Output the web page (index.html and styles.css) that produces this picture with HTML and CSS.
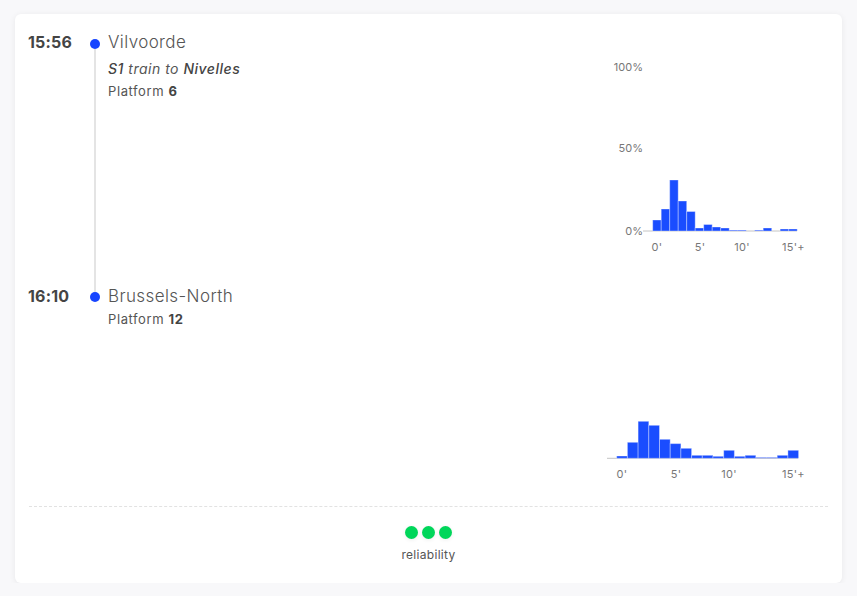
FILE: index.html
```html
<!DOCTYPE html>
<html lang="en">
<head>
<meta charset="utf-8">
<title>Trip</title>
<link rel="stylesheet" href="styles.css">
</head>
<body>
<div class="card">
  <section class="stop stop-first">
    <div class="time">15:56</div>
    <div class="rail"><span class="dot"></span><span class="line"></span></div>
    <div class="info">
      <div class="station">Vilvoorde</div>
      <div class="service"><b>S1</b> train to <b>Nivelles</b></div>
      <div class="platform">Platform <b>6</b></div>
    </div>
    <svg class="chart" width="229" height="254" viewBox="600 28 229 254">
      <g class="ylab">
        <text x="643" y="71">100%</text>
        <text x="643" y="152">50%</text>
        <text x="643" y="235">0%</text>
      </g>
      <line class="base" x1="643" y1="231" x2="797" y2="231"/>
      <g class="bars">
        <rect x="652.7" y="220" width="8.5" height="11"/>
        <rect x="661.2" y="209" width="8.5" height="22"/>
        <rect x="669.7" y="180" width="8.5" height="51"/>
        <rect x="678.2" y="201" width="8.5" height="30"/>
        <rect x="686.7" y="211.5" width="8.5" height="19.5"/>
        <rect x="695.2" y="228" width="8.5" height="3"/>
        <rect x="703.7" y="224.5" width="8.5" height="6.5"/>
        <rect x="712.2" y="227" width="8.5" height="4"/>
        <rect x="720.7" y="228" width="8.5" height="3"/>
        <rect class="faint" x="729.2" y="230" width="8.5" height="1"/>
        <rect class="faint" x="737.7" y="230" width="8.5" height="1"/>
        <rect class="faint" x="754.7" y="230" width="8.5" height="1"/>
        <rect x="763.2" y="228" width="8.5" height="3"/>
        <rect x="780.2" y="229" width="8.5" height="2"/>
        <rect x="788.7" y="229" width="8.5" height="2"/>
      </g>
      <g class="xlab">
        <text x="657" y="251" text-anchor="middle">0'</text>
        <text x="700" y="251" text-anchor="middle">5'</text>
        <text x="742" y="251" text-anchor="middle">10'</text>
        <text x="782" y="251">15'+</text>
      </g>
    </svg>
  </section>
  <section class="stop stop-last">
    <div class="time">16:10</div>
    <div class="rail"><span class="line line-top"></span><span class="dot"></span></div>
    <div class="info">
      <div class="station">Brussels-North</div>
      <div class="platform platform-tight">Platform <b>12</b></div>
    </div>
    <svg class="chart" width="229" height="224" viewBox="600 282 229 224">
      <line class="base" x1="607" y1="458.3" x2="798" y2="458.3"/>
      <g class="bars">
        <rect x="616.7" y="456" width="10.7" height="2.3"/>
        <rect x="627.4" y="442.3" width="10.7" height="16"/>
        <rect x="638.1" y="421.3" width="10.7" height="37"/>
        <rect x="648.8" y="425.3" width="10.7" height="33"/>
        <rect x="659.5" y="439.3" width="10.7" height="19"/>
        <rect x="670.2" y="443.6" width="10.7" height="14.7"/>
        <rect x="680.9" y="448.3" width="10.7" height="10"/>
        <rect x="691.6" y="455.3" width="10.7" height="3"/>
        <rect x="702.3" y="455.3" width="10.7" height="3"/>
        <rect x="713.0" y="456.3" width="10.7" height="2"/>
        <rect x="723.7" y="450.3" width="10.7" height="8"/>
        <rect x="734.4" y="456.3" width="10.7" height="2"/>
        <rect x="745.1" y="455.3" width="10.7" height="3"/>
        <rect class="faint" x="755.8" y="457.3" width="10.7" height="1"/>
        <rect class="faint" x="766.5" y="457.3" width="10.7" height="1"/>
        <rect x="777.2" y="455.3" width="10.7" height="3"/>
        <rect x="787.9" y="450.3" width="10.7" height="8"/>
      </g>
      <g class="xlab">
        <text x="622" y="478" text-anchor="middle">0'</text>
        <text x="676" y="478" text-anchor="middle">5'</text>
        <text x="729" y="478" text-anchor="middle">10'</text>
        <text x="782" y="478">15'+</text>
      </g>
    </svg>
  </section>
  <footer class="footer">
    <div class="dots"><span></span><span></span><span></span></div>
    <div class="label">reliability</div>
  </footer>
</div>
</body>
</html>
```
FILE: styles.css
```css
html, body {
  margin: 0;
  padding: 0;
  background: #f8f8fa;
}
body {
  padding: 14px 15px 0 15px;
  font-family: "Inter", "Noto Sans", sans-serif;
  color: #555;
}
.card {
  width: 827px;
  height: 569px;
  box-sizing: border-box;
  background: #fff;
  border-radius: 6px;
  box-shadow: 0 1px 6px rgba(0, 0, 0, 0.07);
  padding: 14px 14px 0 13px;
  display: flex;
  flex-direction: column;
}
.stop {
  display: grid;
  grid-template-columns: 61px 12px 1fr 228px;
  align-items: stretch;
}
.stop-first { height: 254px; }
.stop-last { height: 224px; }
.time {
  font-size: 16px;
  font-weight: 700;
  color: #444;
  line-height: 28px;
  letter-spacing: 0.2px;
}
.rail {
  display: flex;
  flex-direction: column;
  align-items: center;
}
.stop-first .rail { padding-top: 11px; }
.dot {
  width: 10px;
  height: 10px;
  border-radius: 50%;
  background: #1745ff;
  flex: none;
}
.line {
  width: 2px;
  flex: 1;
  background: #e4e4e4;
}
.line-top {
  flex: none;
  height: 10px;
}
.info {
  padding-left: 7px;
}
.station {
  font-size: 17px;
  font-weight: 300;
  line-height: 28px;
  color: #555;
  letter-spacing: 0.4px;
}
.service {
  margin-top: 3px;
  font-size: 14px;
  line-height: 20px;
  font-style: italic;
  color: #555;
  letter-spacing: 0.5px;
}
.service b { font-weight: 500; color: #444; }
.platform {
  margin-top: 2px;
  font-size: 13px;
  line-height: 20px;
  color: #555;
  letter-spacing: 0.6px;
}
.platform b { font-weight: 700; color: #444; }
.platform-tight {
  margin-top: 0;
  line-height: 18px;
}
.chart { display: block; }
.ylab text {
  font-family: "Inter", sans-serif;
  font-size: 11px;
  fill: #777;
  text-anchor: end;
}
.xlab text {
  font-family: "Inter", sans-serif;
  font-size: 11px;
  fill: #777;
  letter-spacing: 0.3px;
}
.base {
  stroke: #c4c4c4;
  stroke-width: 1;
}
.bars rect {
  fill: #1a4dff;
  stroke: rgba(255, 255, 255, 0.35);
  stroke-width: 1;
}
.bars rect.faint {
  fill: #7f99ff;
  stroke: none;
}
.footer {
  border-top: 1px dashed #e2e2e2;
  margin-left: 1px;
  padding-top: 19px;
  display: flex;
  flex-direction: column;
  align-items: center;
}
.dots {
  display: flex;
  gap: 4px;
}
.dots span {
  width: 13px;
  height: 13px;
  border-radius: 50%;
  background: #00d65a;
  box-shadow: 0 1px 4px rgba(0, 0, 0, 0.08);
}
.label {
  margin-top: 8px;
  font-size: 12px;
  line-height: 16px;
  color: #555;
  letter-spacing: 0.3px;
}
```
